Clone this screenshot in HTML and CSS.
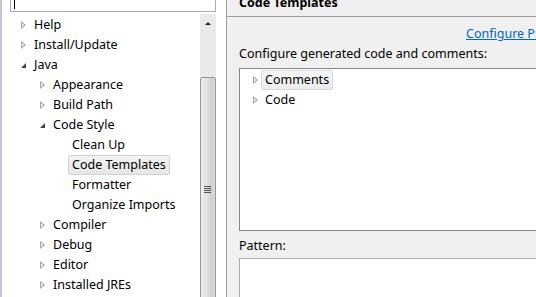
FILE: index.html
```html
<!DOCTYPE html>
<html lang="en">
<head>
    <meta charset="UTF-8">
    <title>Preferences - Code Templates</title>
    <link rel="stylesheet" href="styles.css">
</head>
<body>
    <div class="window">
        <div class="nav">
            <div class="filter"><span class="caret"></span></div>
            <div class="nav-body">
                <ul class="tree">
                    <li class="node lvl0"><span class="tw closed"></span>Help</li>
                    <li class="node lvl0"><span class="tw closed"></span>Install/Update</li>
                    <li class="node lvl0"><span class="tw open"></span>Java</li>
                    <li class="node lvl1"><span class="tw closed"></span>Appearance</li>
                    <li class="node lvl1"><span class="tw closed"></span>Build Path</li>
                    <li class="node lvl1"><span class="tw open"></span>Code Style</li>
                    <li class="node lvl2"><span class="label">Clean Up</span></li>
                    <li class="node lvl2"><span class="label selected">Code Templates</span></li>
                    <li class="node lvl2"><span class="label">Formatter</span></li>
                    <li class="node lvl2"><span class="label">Organize Imports</span></li>
                    <li class="node lvl1"><span class="tw closed"></span>Compiler</li>
                    <li class="node lvl1"><span class="tw closed"></span>Debug</li>
                    <li class="node lvl1"><span class="tw closed"></span>Editor</li>
                    <li class="node lvl1"><span class="tw closed"></span>Installed JREs</li>
                </ul>
                <div class="vscroll">
                    <div class="arrow-up"></div>
                    <div class="thumb"><span class="grip"></span></div>
                </div>
            </div>
        </div>

        <div class="page">
            <div class="page-title">Code Templates</div>
            <div class="page-content">
                <div class="link-row"><a href="#" class="link">Configure Project Specific Settings...</a></div>
                <div class="field-label">Configure generated code and comments:</div>
                <div class="box templates">
                    <div class="trow"><span class="tw small closed"></span><span class="tlabel hover">Comments</span></div>
                    <div class="trow"><span class="tw small closed"></span><span class="tlabel">Code</span></div>
                </div>
                <div class="field-label pattern-label">Pattern:</div>
                <div class="box pattern"></div>
            </div>
        </div>
    </div>
</body>
</html>
```

FILE: styles.css
```css
body {
    margin: 0;
    width: 536px;
    height: 297px;
    overflow: hidden;
    font-family: "Noto Sans", "Liberation Sans", sans-serif;
    font-size: 12.5px;
    color: #000;
    background: #f0f0f0;
}

.window {
    display: flex;
    height: 297px;
}

/* left navigation */
.nav {
    width: 224px;
    flex: none;
    background: #fff;
    border-left: 2px solid #b9c9da;
}

.filter {
    margin-left: 8px;
    width: 204px;
    height: 11px;
    border: 1px solid #abadb3;
    border-top: none;
    position: relative;
}

.caret {
    position: absolute;
    left: 3px;
    top: 0;
    width: 1px;
    height: 9px;
    background: #000;
}

.nav-body {
    display: flex;
    margin-top: 2px;
}

.tree {
    list-style: none;
    margin: 1px 0 0;
    padding: 0;
    width: 198px;
}

.node {
    height: 20px;
    line-height: 20px;
    display: flex;
    align-items: center;
    white-space: nowrap;
}

.lvl0 { padding-left: 19px; }
.lvl1 { padding-left: 38px; }
.lvl2 { padding-left: 66px; }

.tw {
    width: 13px;
    height: 20px;
    flex: none;
    position: relative;
}

.tw.small {
    width: 8px;
}

.tw.closed:before {
    content: "";
    position: absolute;
    left: 0;
    top: 6px;
    border-style: solid;
    border-width: 4px 0 4px 5px;
    border-color: transparent transparent transparent #a6a6a6;
}

.tw.closed:after {
    content: "";
    position: absolute;
    left: 1px;
    top: 8px;
    border-style: solid;
    border-width: 2px 0 2px 2.5px;
    border-color: transparent transparent transparent #fff;
}

.tw.open:before {
    content: "";
    position: absolute;
    left: 0;
    top: 8px;
    border-style: solid;
    border-width: 0 0 5px 5px;
    border-color: transparent transparent #404040 transparent;
}

.label {
    padding: 0 3px;
    line-height: 18px;
    border: 1px solid transparent;
    border-radius: 2px;
}

.label.selected {
    background: linear-gradient(#f4f4f4, #e6e6e6);
    border-color: #d2d2d2;
}

.vscroll {
    width: 16px;
    height: 300px;
    background: #eaeaea;
    flex: none;
}

.arrow-up {
    height: 20px;
    position: relative;
}

.arrow-up:before {
    content: "";
    position: absolute;
    left: 5px;
    top: 8px;
    border-style: solid;
    border-width: 0 3px 3px 3px;
    border-color: transparent transparent #222 transparent;
}

.thumb {
    margin-top: 43px;
    height: 240px;
    border: 1px solid #979797;
    border-radius: 2px;
    box-sizing: border-box;
    background: linear-gradient(to right, #ededed, #e2e2e2 40%, #cfcfcf 75%, #dcdcdc);
    position: relative;
}

.grip {
    position: absolute;
    left: 3px;
    top: 108px;
    width: 7px;
    height: 7px;
    background: repeating-linear-gradient(#555 0, #555 1px, transparent 1px, transparent 2px);
}

/* right page */
.page {
    flex: 1;
    border-left: 1px solid #a0a0a0;
    min-width: 0;
}

.page-title {
    height: 16px;
    line-height: 6px;
    padding-left: 12px;
    font-weight: bold;
    border-bottom: 1px solid #a0a0a0;
    overflow: hidden;
    white-space: nowrap;
}

.page-content {
    padding-left: 12px;
}

.link-row {
    height: 21px;
    line-height: 22px;
    padding-top: 6px;
    padding-left: 227px;
    white-space: nowrap;
}

.link {
    color: #0066cc;
    text-decoration: underline;
}

.field-label {
    height: 24px;
    line-height: 20px;
    white-space: nowrap;
}

.box {
    background: #fff;
    border: 1px solid #828790;
    border-right: none;
    box-sizing: border-box;
}

.templates {
    height: 163px;
    padding-left: 13px;
    padding-top: 1px;
}

.trow {
    height: 20px;
    display: flex;
    align-items: center;
}

.tlabel {
    padding: 0 3px;
    line-height: 18px;
    border: 1px solid transparent;
    border-radius: 2px;
}

.tlabel.hover {
    background: linear-gradient(#f6f6f6, #ececec);
    border-color: #dadada;
}

.pattern-label {
    height: 20px;
    margin-top: 5px;
}

.pattern {
    margin-top: 2px;
    height: 60px;
    border-color: #abadb3;
}
```
